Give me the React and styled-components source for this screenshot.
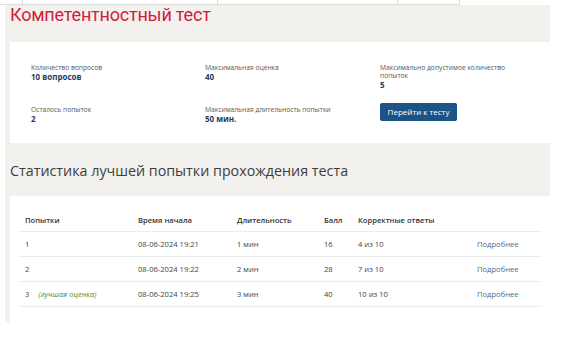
import styled, { createGlobalStyle } from "styled-components";

const GlobalStyle = createGlobalStyle`
  body {
    margin: 0;
    background: #fff;
    font-family: "Open Sans", "Noto Sans", sans-serif;
  }
`;

const TabStrip = styled.div`
  display: flex;
  height: 5px;
`;

const TabCell = styled.div`
  width: ${({ w }) => w}px;
  border-right: 1px solid #dcdcdc;
  border-bottom: 1px solid #dcdcdc;
`;

const Panel = styled.section`
  margin-left: 5px;
  width: 545px;
  background: #f2f1ee;
  padding-left: 5px;
  box-sizing: border-box;
`;

const PageTitle = styled.h1`
  margin: 0;
  padding-bottom: 18px;
  font-family: Roboto, "Liberation Sans", sans-serif;
  font-weight: 400;
  font-size: 18px;
  line-height: 19px;
  color: #d2203c;
  letter-spacing: -0.2px;
`;

const Card = styled.div`
  background: #fff;
  padding: ${({ pad }) => pad};
`;

const InfoGrid = styled.div`
  display: grid;
  grid-template-columns: 174px 175px 1fr;
  row-gap: 14px;
  align-items: start;
`;

const InfoItem = styled.div`
  padding-top: ${({ shift }) => (shift ? "3px" : "0")};
  line-height: 0;
`;

const Label = styled.div`
  font-size: 6.7px;
  line-height: 8px;
  color: #555;
  max-width: ${({ narrow }) => (narrow ? "125px" : "none")};
`;

const Value = styled.div`
  font-size: 8px;
  line-height: 9px;
  font-weight: 700;
  color: #1d3a5f;
`;

const Button = styled.button`
  width: 77px;
  height: 18px;
  padding: 0;
  border: none;
  border-radius: 2px;
  background: #1d5487;
  color: #fff;
  font-family: "Open Sans", sans-serif;
  font-size: 8px;
  line-height: 18px;
  cursor: pointer;
`;

const SectionTitle = styled.h2`
  margin: 0;
  padding: 17px 0 14px;
  font-size: 14.3px;
  line-height: 22px;
  font-weight: 400;
  color: #3d3d3d;
`;

const Table = styled.table`
  width: 523px;
  border-collapse: collapse;
  table-layout: fixed;
  font-size: 7.6px;
  color: #444;
`;

const Th = styled.th`
  width: ${({ w }) => w - 6}px;
  height: 22px;
  padding: 0 0 0 6px;
  text-align: left;
  font-weight: 600;
  color: #333;
  border-bottom: 1px solid #ececec;
`;

const Td = styled.td`
  height: 24px;
  padding: 0 0 0 6px;
  border-bottom: 1px solid #ececec;
  white-space: nowrap;
`;

const Best = styled.span`
  margin-left: 9px;
  font-style: italic;
  color: #3c8f3c;
`;

const DetailsLink = styled.a`
  color: #4a6b93;
  text-decoration: none;
`;

const cols = [113, 99, 87, 34, 119, 71];
const headers = ["Попытки", "Время начала", "Длительность", "Балл", "Корректные ответы", ""];

const attempts = [
  { n: 1, start: "08-06-2024 19:21", dur: "1 мин", score: 16, correct: "4 из 10" },
  { n: 2, start: "08-06-2024 19:22", dur: "2 мин", score: 28, correct: "7 из 10" },
  { n: 3, start: "08-06-2024 19:25", dur: "3 мин", score: 40, correct: "10 из 10", best: true },
];

export default function App() {
  return (
    <>
      <GlobalStyle />
      <TabStrip>
        <TabCell w={22} />
        <TabCell w={194} />
        <TabCell w={179} />
        <TabCell w={61} />
      </TabStrip>
      <Panel>
        <PageTitle>Компетентностный тест</PageTitle>
        <Card pad="22px 0 20px 21px">
          <InfoGrid>
            <InfoItem>
              <Label>Количество вопросов</Label>
              <Value>10 вопросов</Value>
            </InfoItem>
            <InfoItem>
              <Label>Максимальная оценка</Label>
              <Value>40</Value>
            </InfoItem>
            <InfoItem>
              <Label narrow>Максимально допустимое количество попыток</Label>
              <Value>5</Value>
            </InfoItem>
            <InfoItem shift>
              <Label>Осталось попыток</Label>
              <Value>2</Value>
            </InfoItem>
            <InfoItem shift>
              <Label>Максимальная длительность попытки</Label>
              <Value>50 мин.</Value>
            </InfoItem>
            <InfoItem>
              <Button>Перейти к тесту</Button>
            </InfoItem>
          </InfoGrid>
        </Card>
        <SectionTitle>Статистика лучшей попытки прохождения теста</SectionTitle>
        <Card pad="13px 8px 16px 9px">
          <Table>
            <thead>
              <tr>
                {headers.map((h, i) => (
                  <Th key={i} w={cols[i]}>{h}</Th>
                ))}
              </tr>
            </thead>
            <tbody>
              {attempts.map((a) => (
                <tr key={a.n}>
                  <Td>
                    {a.n}
                    {a.best && <Best>(лучшая оценка)</Best>}
                  </Td>
                  <Td>{a.start}</Td>
                  <Td>{a.dur}</Td>
                  <Td>{a.score}</Td>
                  <Td>{a.correct}</Td>
                  <Td>
                    <DetailsLink href="#">Подробнее</DetailsLink>
                  </Td>
                </tr>
              ))}
            </tbody>
          </Table>
        </Card>
      </Panel>
    </>
  );
}
